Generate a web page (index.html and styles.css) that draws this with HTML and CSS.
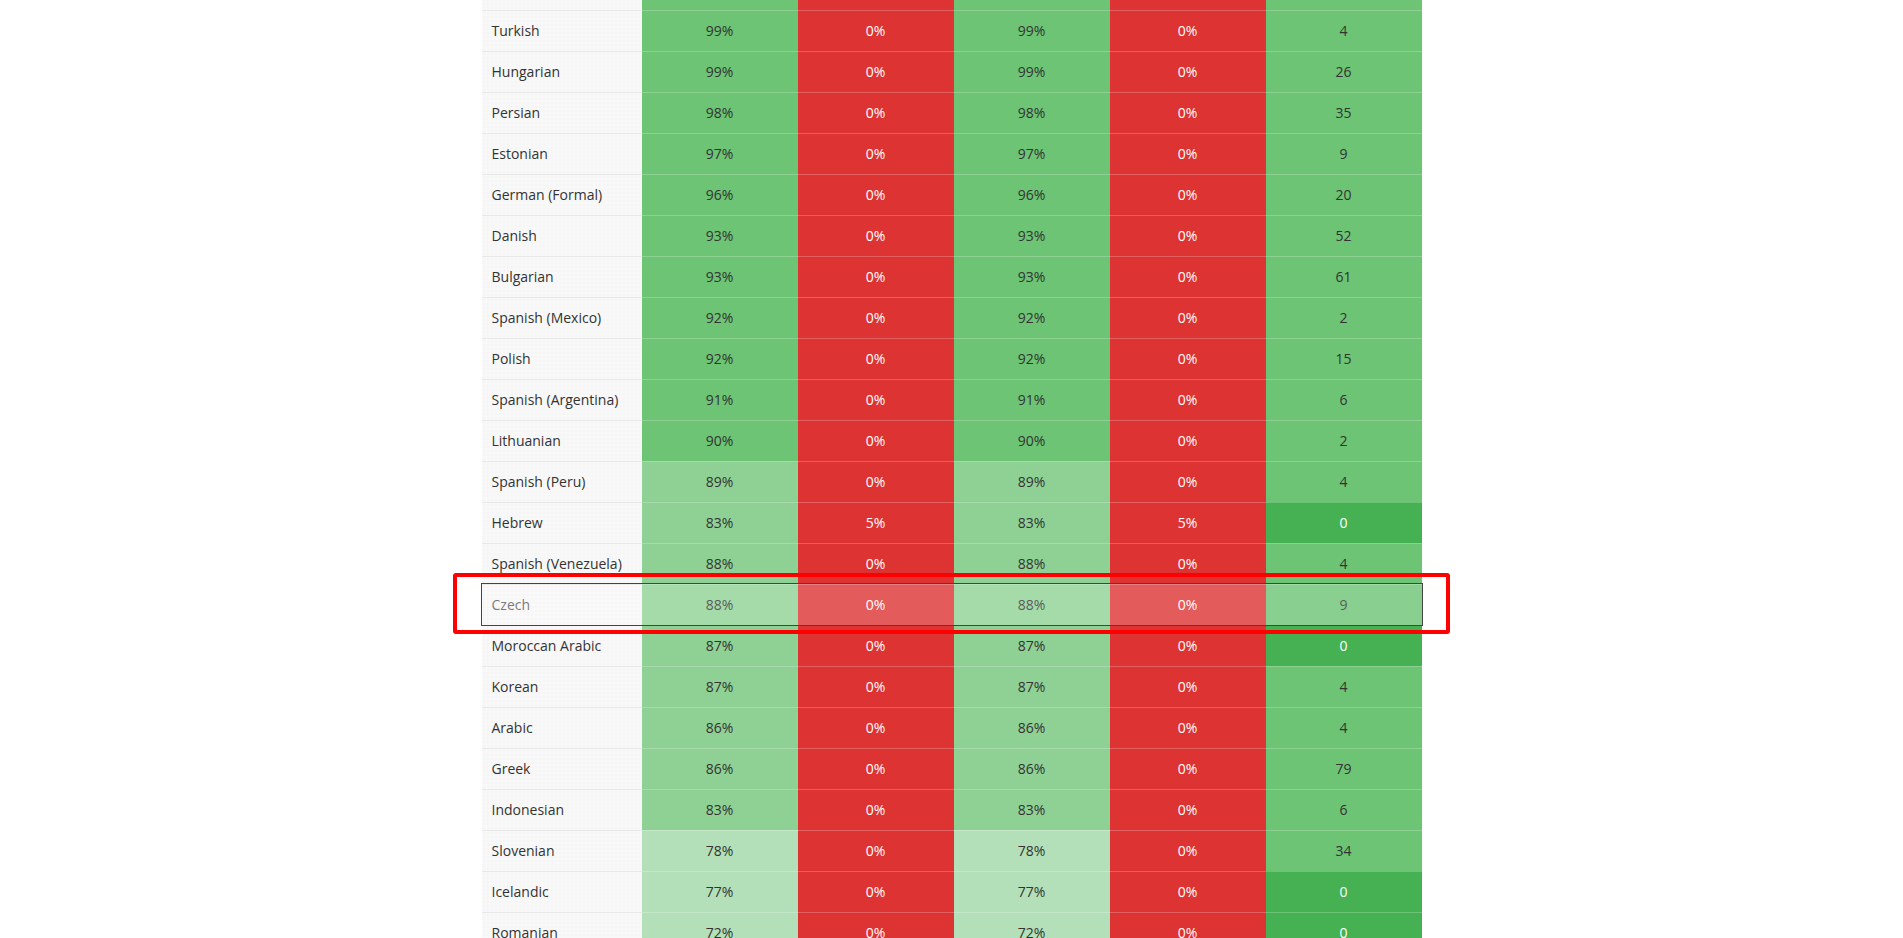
FILE: index.html
```html
<!DOCTYPE html>
<html lang="en">
<head>
    <meta charset="UTF-8">
    <meta name="viewport" content="width=device-width, initial-scale=1.0">
    <title>Translation Status</title>
    <link rel="stylesheet" href="styles.css">
</head>
<body>
    <div class="stats-wrap">
        <table class="stats-table">
            <colgroup>
                <col class="col-lang">
                <col><col><col><col><col>
            </colgroup>
            <tbody>
                <!-- row scrolled above the viewport -->
                <tr><td class="lang"></td><td class="pct high"></td><td class="bad"></td><td class="pct high"></td><td class="bad"></td><td class="count"></td></tr>
                <tr><td class="lang">Turkish</td><td class="pct high">99%</td><td class="bad">0%</td><td class="pct high">99%</td><td class="bad">0%</td><td class="count">4</td></tr>
                <tr><td class="lang">Hungarian</td><td class="pct high">99%</td><td class="bad">0%</td><td class="pct high">99%</td><td class="bad">0%</td><td class="count">26</td></tr>
                <tr><td class="lang">Persian</td><td class="pct high">98%</td><td class="bad">0%</td><td class="pct high">98%</td><td class="bad">0%</td><td class="count">35</td></tr>
                <tr><td class="lang">Estonian</td><td class="pct high">97%</td><td class="bad">0%</td><td class="pct high">97%</td><td class="bad">0%</td><td class="count">9</td></tr>
                <tr><td class="lang">German (Formal)</td><td class="pct high">96%</td><td class="bad">0%</td><td class="pct high">96%</td><td class="bad">0%</td><td class="count">20</td></tr>
                <tr><td class="lang">Danish</td><td class="pct high">93%</td><td class="bad">0%</td><td class="pct high">93%</td><td class="bad">0%</td><td class="count">52</td></tr>
                <tr><td class="lang">Bulgarian</td><td class="pct high">93%</td><td class="bad">0%</td><td class="pct high">93%</td><td class="bad">0%</td><td class="count">61</td></tr>
                <tr><td class="lang">Spanish (Mexico)</td><td class="pct high">92%</td><td class="bad">0%</td><td class="pct high">92%</td><td class="bad">0%</td><td class="count">2</td></tr>
                <tr><td class="lang">Polish</td><td class="pct high">92%</td><td class="bad">0%</td><td class="pct high">92%</td><td class="bad">0%</td><td class="count">15</td></tr>
                <tr><td class="lang">Spanish (Argentina)</td><td class="pct high">91%</td><td class="bad">0%</td><td class="pct high">91%</td><td class="bad">0%</td><td class="count">6</td></tr>
                <tr><td class="lang">Lithuanian</td><td class="pct high">90%</td><td class="bad">0%</td><td class="pct high">90%</td><td class="bad">0%</td><td class="count">2</td></tr>
                <tr><td class="lang">Spanish (Peru)</td><td class="pct mid">89%</td><td class="bad">0%</td><td class="pct mid">89%</td><td class="bad">0%</td><td class="count">4</td></tr>
                <tr><td class="lang">Hebrew</td><td class="pct mid">83%</td><td class="bad">5%</td><td class="pct mid">83%</td><td class="bad">5%</td><td class="count zero">0</td></tr>
                <tr><td class="lang">Spanish (Venezuela)</td><td class="pct mid">88%</td><td class="bad">0%</td><td class="pct mid">88%</td><td class="bad">0%</td><td class="count">4</td></tr>
                <tr class="is-hover"><td class="lang">Czech</td><td class="pct mid">88%</td><td class="bad">0%</td><td class="pct mid">88%</td><td class="bad">0%</td><td class="count">9</td></tr>
                <tr><td class="lang">Moroccan Arabic</td><td class="pct mid">87%</td><td class="bad">0%</td><td class="pct mid">87%</td><td class="bad">0%</td><td class="count zero">0</td></tr>
                <tr><td class="lang">Korean</td><td class="pct mid">87%</td><td class="bad">0%</td><td class="pct mid">87%</td><td class="bad">0%</td><td class="count">4</td></tr>
                <tr><td class="lang">Arabic</td><td class="pct mid">86%</td><td class="bad">0%</td><td class="pct mid">86%</td><td class="bad">0%</td><td class="count">4</td></tr>
                <tr><td class="lang">Greek</td><td class="pct mid">86%</td><td class="bad">0%</td><td class="pct mid">86%</td><td class="bad">0%</td><td class="count">79</td></tr>
                <tr><td class="lang">Indonesian</td><td class="pct mid">83%</td><td class="bad">0%</td><td class="pct mid">83%</td><td class="bad">0%</td><td class="count">6</td></tr>
                <tr><td class="lang">Slovenian</td><td class="pct low">78%</td><td class="bad">0%</td><td class="pct low">78%</td><td class="bad">0%</td><td class="count">34</td></tr>
                <tr><td class="lang">Icelandic</td><td class="pct low">77%</td><td class="bad">0%</td><td class="pct low">77%</td><td class="bad">0%</td><td class="count zero">0</td></tr>
                <tr><td class="lang">Romanian</td><td class="pct low">72%</td><td class="bad">0%</td><td class="pct low">72%</td><td class="bad">0%</td><td class="count zero">0</td></tr>
            </tbody>
        </table>

        <!-- annotation box drawn over the hovered row -->
        <div class="highlight-box"></div>
    </div>
</body>
</html>
```

FILE: styles.css
```css
* {
    margin: 0;
    padding: 0;
    box-sizing: border-box;
}

body {
    font-family: 'Open Sans', 'Liberation Sans', sans-serif;
    font-size: 14px;
    color: #333;
    background: #fff;
    overflow: hidden;
}

.stats-wrap {
    position: relative;
    width: 940px;
    margin: -31px auto 0;
}

.stats-table {
    width: 940px;
    table-layout: fixed;
    border-collapse: separate;
    border-spacing: 0;
}

.stats-table col {
    width: 156px;
}

.stats-table col.col-lang {
    width: 160px;
}

.stats-table td {
    height: 41px;
    border-top: 1px solid rgba(255, 255, 255, 0.22);
    text-align: center;
    vertical-align: middle;
    padding: 0 10px;
    line-height: 20px;
}

.stats-table td.lang {
    text-align: left;
    background-color: #f8f8f8;
    background-image: radial-gradient(rgba(0, 0, 0, 0.025) 0.6px, transparent 0.8px);
    background-size: 4px 4px;
    border-top-color: #e8e8e8;
    white-space: nowrap;
}

.pct.high {
    background: #6cc474;
}

.pct.mid {
    background: #8fd194;
}

.pct.low {
    background: #b3e0b8;
}

.bad {
    background: #dd3333;
    color: #fff;
}

.count {
    background: #6cc474;
}

.count.zero {
    background: #45b153;
    color: #fff;
}

.is-hover {
    outline: 1px solid #444;
}

.is-hover td {
    opacity: 0.8;
}

.is-hover td.lang {
    color: #5a5a5a;
}

.highlight-box {
    position: absolute;
    top: 604px;
    left: -29px;
    width: 997px;
    height: 61px;
    border: 4px solid #ff0000;
    border-radius: 3px;
    pointer-events: none;
}
```
